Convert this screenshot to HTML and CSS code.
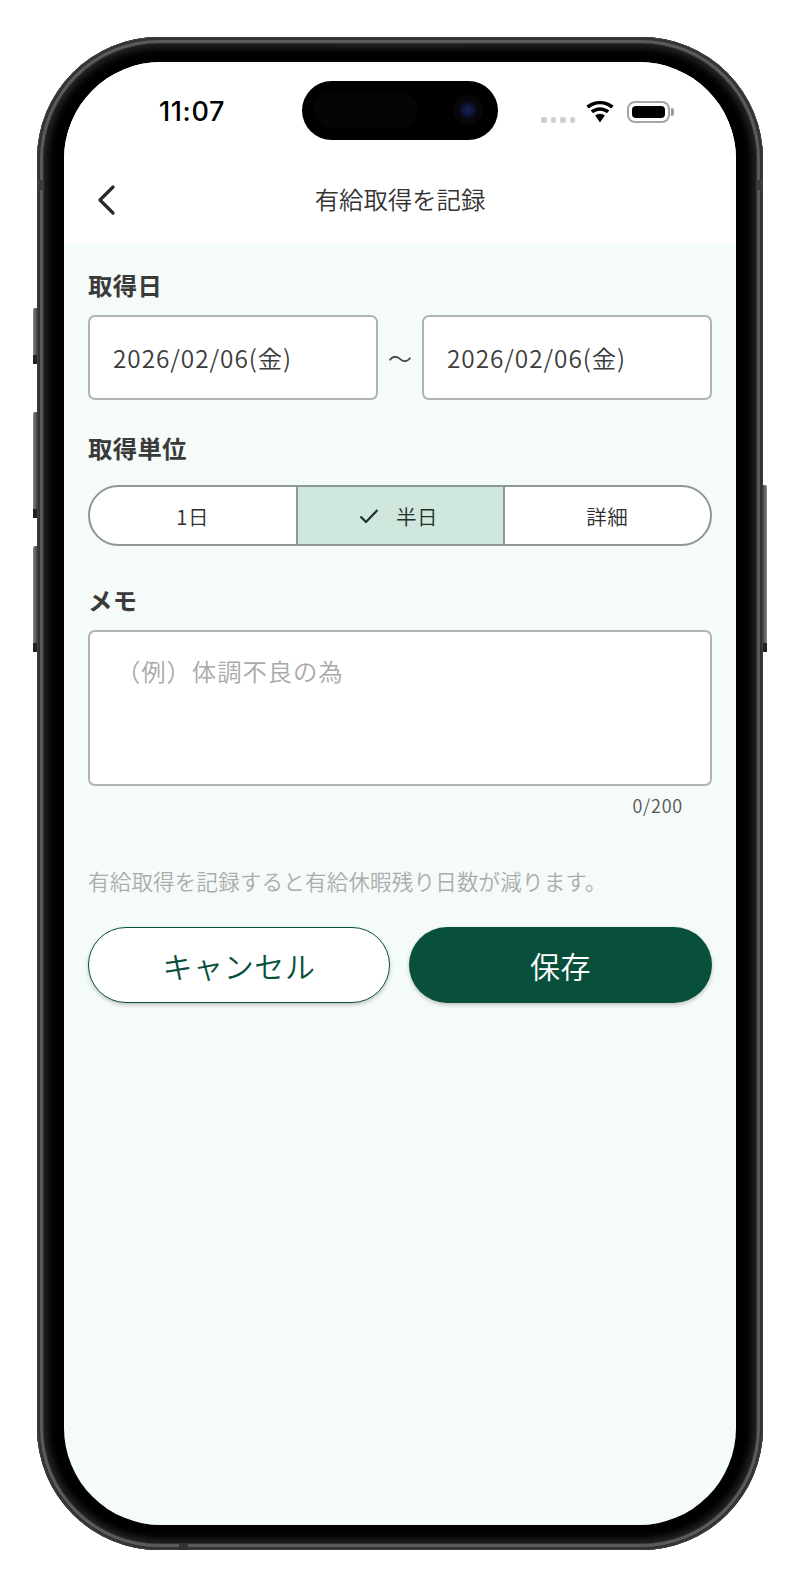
FILE: index.html
```html
<!DOCTYPE html>
<html lang="ja">
<head>
<meta charset="utf-8">
<title>有給取得を記録</title>
<link rel="stylesheet" href="styles.css">
</head>
<body>
<div class="phone">
  <span class="btn btn-silent"></span>
  <span class="btn btn-up"></span>
  <span class="btn btn-down"></span>
  <span class="btn btn-power"></span>
  <span class="seam seam-l"></span>
  <span class="seam seam-r"></span>
  <span class="seam-b"></span>
  <span class="speaker"></span>
  <div class="bezel">
    <div class="screen">
      <div class="island"><span class="island-sensor"></span><span class="lens"></span></div>
      <header class="appbar">
        <div class="statusbar">
          <span class="time">11:07</span>
          <div class="status-icons">
            <span class="dots"><i></i><i></i><i></i><i></i></span>
            <svg class="wifi" viewBox="0 0 29 21" aria-hidden="true"><path d="M14.5 3.2c4.2 0 8 1.6 10.9 4.2l2.4-2.7C24.300 1.500 19.600 0 14.500 0S4.700 1.500 1.200 4.700l2.400 2.700c2.900-2.600 6.700-4.200 10.900-4.200z"/><path d="M14.500 9.500c2.600 0 4.900 1 6.700 2.500l2.400-2.700c-2.500-2.100-5.600-3.300-9.100-3.300s-6.600 1.200-9.100 3.300l2.400 2.700c1.800-1.500 4.100-2.500 6.700-2.500z"/><path d="M14.500 12.400c-1.800 0-3.400.7-4.600 1.700l4.600 6.900 4.600-6.900c-1.200-1-2.800-1.700-4.600-1.700z"/></svg>
            <span class="battery"><span class="battery-fill"></span></span>
            <span class="battery-cap"></span>
          </div>
        </div>
        <div class="navbar">
          <svg class="back" viewBox="0 0 18 30" aria-hidden="true"><path d="M16 2 3 15l13 13"/></svg>
          <h1 class="title">有給取得を記録</h1>
        </div>
      </header>
      <main class="content">
        <h2 class="label">取得日</h2>
        <div class="date-row">
          <div class="field">2026/02/06(金)</div>
          <span class="tilde">〜</span>
          <div class="field">2026/02/06(金)</div>
        </div>
        <h2 class="label label-unit">取得単位</h2>
        <div class="segments">
          <div class="seg">1日</div>
          <div class="seg seg-on">
            <svg class="check" viewBox="0 0 20 16" aria-hidden="true"><path d="M1.500 8.500 7 14 18.500 2"/></svg>
            <span>半日</span>
          </div>
          <div class="seg">詳細</div>
        </div>
        <h2 class="label label-memo">メモ</h2>
        <div class="memo">（例）体調不良の為</div>
        <div class="counter">0/200</div>
        <p class="note">有給取得を記録すると有給休暇残り日数が減ります。</p>
        <div class="actions">
          <button class="action action-ghost">キャンセル</button>
          <button class="action action-solid">保存</button>
        </div>
      </main>
    </div>
  </div>
</div>
</body>
</html>
```
FILE: styles.css
```css
* { box-sizing: border-box; }
html, body { margin: 0; padding: 0; background: #fff; }
body {
  width: 800px;
  height: 1587px;
  overflow: hidden;
  padding: 37px;
  font-family: "Noto Sans CJK JP", "Noto Sans", sans-serif;
  font-weight: 350;
  color: #333;
}
.phone {
  position: relative;
  width: 726px;
  height: 1513px;
  border-radius: 122px;
  padding: 7px;
  background: #2e2e2e;
  box-shadow: inset 0 0 0 1px #3e3e3e, inset 0 0 0 3px #333, inset 0 0 1px 6px #5c5c5c;
}
.bezel {
  width: 712px;
  height: 1499px;
  border-radius: 115px;
  padding: 18px 20px;
  background: #000;
  box-shadow: inset 0 0 8px 3px #2c2c2c;
}
.screen {
  position: relative;
  width: 672px;
  height: 1463px;
  border-radius: 97px;
  overflow: hidden;
  background: #f5fbf8;
}
.btn {
  position: absolute;
  width: 4px;
  background: linear-gradient(90deg, #8a8a8a, #444);
}
.btn::after {
  content: "";
  position: absolute;
  left: 0; right: 0; bottom: 0;
  height: 9px;
  background: #222;
}
.btn-silent { left: -4px; top: 271px; height: 56px; border-radius: 2px 0 0 2px; }
.btn-up { left: -4px; top: 375px; height: 106px; border-radius: 2px 0 0 2px; }
.btn-down { left: -4px; top: 509px; height: 106px; border-radius: 2px 0 0 2px; }
.btn-power { right: -4px; top: 448px; height: 167px; transform: scaleX(-1); border-radius: 2px 0 0 2px; }
.seam { position: absolute; width: 7px; height: 10px; top: 143px; background: #3c3c3c; }
.seam-l { left: 0; }
.seam-r { right: 0; }
.seam-b { position: absolute; left: 142px; bottom: 0; width: 9px; height: 7px; background: #333; }
.speaker {
  position: absolute;
  left: 296px;
  top: 7px;
  width: 134px;
  height: 3px;
  background: #1c1c1c;
  border-radius: 0 0 3px 3px;
  z-index: 1;
}
.island {
  position: absolute;
  left: 238px;
  top: 19px;
  width: 196px;
  height: 59px;
  border-radius: 30px;
  background: #000;
  z-index: 2;
}
.island-sensor {
  position: absolute;
  left: 12px;
  top: 11px;
  width: 104px;
  height: 36px;
  border-radius: 18px;
  background: #050505;
}
.lens {
  position: absolute;
  left: 151px;
  top: 14px;
  width: 30px;
  height: 30px;
  border-radius: 50%;
  background: radial-gradient(circle, #18235c 0, #10153a 22%, #060609 48%, #09090c 100%);
}
.appbar {
  background: #fff;
  height: 181px;
}
.statusbar {
  height: 84px;
  position: relative;
}
.time {
  position: absolute;
  left: 95px;
  top: 35px;
  font-family: "Inter", sans-serif;
  font-weight: 500;
  font-size: 27px;
  letter-spacing: .6px;
  line-height: 30px;
  color: #000;
}
.status-icons { display: block; }
.dots {
  position: absolute;
  left: 477px;
  top: 55px;
  display: flex;
  gap: 4px;
}
.dots i {
  display: block;
  width: 5.500px;
  height: 5.500px;
  border-radius: 2px;
  background: #cfcfcf;
}
.wifi {
  position: absolute;
  left: 521px;
  top: 39px;
  width: 30px;
  height: 21.500px;
  fill: #000;
}
.battery {
  position: absolute;
  left: 563px;
  top: 39px;
  width: 43px;
  height: 22px;
  padding: 3px;
  border: 2px solid #a6a6a6;
  border-radius: 8px;
  background: #fff;
}
.battery-fill {
  display: block;
  height: 100%;
  background: #000;
  border-radius: 4px;
}
.battery-cap {
  position: absolute;
  left: 607px;
  top: 46px;
  width: 3px;
  height: 8px;
  background: #9c9c9c;
  border-radius: 0 2px 2px 0;
}
.navbar {
  position: relative;
  height: 97px;
  display: flex;
  align-items: center;
  justify-content: center;
  padding-top: 8px;
}
.back {
  position: absolute;
  left: 33px;
  top: 39px;
  width: 18px;
  height: 30px;
  fill: none;
  stroke: #2a2a2a;
  stroke-width: 3.200;
  stroke-linecap: round;
  stroke-linejoin: round;
}
.title {
  margin: 0;
  font-weight: 350;
  font-size: 24.400px;
  line-height: 36px;
  color: #333;
}
.content {
  padding: 24px 24px 0;
}
.label {
  margin: 0;
  font-weight: 700;
  font-size: 24.400px;
  letter-spacing: .3px;
  line-height: 36px;
  color: #3a3a3a;
}
.date-row {
  display: flex;
  align-items: center;
  margin-top: 12px;
}
.field {
  width: 290px;
  height: 85px;
  padding-left: 23px;
  display: flex;
  align-items: center;
  background: #fff;
  border: 2px solid #b2b4b3;
  border-radius: 7px;
  font-size: 24.400px;
  letter-spacing: .95px;
  color: #3c3c3c;
}
.tilde {
  width: 44px;
  text-align: center;
  font-size: 24px;
  color: #444;
}
.label-unit { margin-top: 30px; }
.segments {
  display: flex;
  height: 61px;
  margin-top: 19px;
  border: 2px solid #8e9894;
  border-radius: 31px;
  overflow: hidden;
  background: #fff;
}
.seg {
  flex: 1;
  display: flex;
  align-items: center;
  justify-content: center;
  gap: 17px;
  font-size: 20.500px;
  letter-spacing: .5px;
  color: #2e2e2e;
}
.seg-on {
  flex: 0 0 209px;
  padding-right: 3px;
  background: #cfe7dc;
  border-left: 2px solid #8e9894;
  border-right: 2px solid #8e9894;
  color: #1f2f2a;
}
.check {
  width: 20px;
  height: 16px;
  fill: none;
  stroke: #1f2f2a;
  stroke-width: 2.200;
}
.label-memo { margin-top: 36px; }
.memo {
  height: 156px;
  margin-top: 12px;
  padding: 21px 24px 0 26px;
  background: #fff;
  border: 2px solid #b2b4b3;
  border-radius: 7px;
  font-size: 24.400px;
  letter-spacing: .9px;
  line-height: 36px;
  color: #a9a9a9;
}
.counter {
  margin-top: 6px;
  padding-right: 29px;
  text-align: right;
  font-size: 18px;
  letter-spacing: .8px;
  line-height: 26px;
  color: #555;
}
.note {
  margin: 47px 0 0;
  font-size: 21.500px;
  letter-spacing: .2px;
  line-height: 32px;
  color: #a9adab;
}
.actions {
  display: flex;
  gap: 19px;
  margin-top: 30px;
}
.action {
  height: 76px;
  border-radius: 38px;
  font-family: inherit;
  font-weight: 350;
  font-size: 30px;
  letter-spacing: .6px;
  padding: 0;
  box-shadow: 0 2px 4px rgba(0, 0, 0, .22);
}
.action-ghost {
  flex: 0 0 302px;
  background: #fff;
  border: 1px solid #08503c;
  color: #08503c;
}
.action-solid {
  flex: 1;
  background: #08503c;
  border: 0;
  color: #fff;
}
```
